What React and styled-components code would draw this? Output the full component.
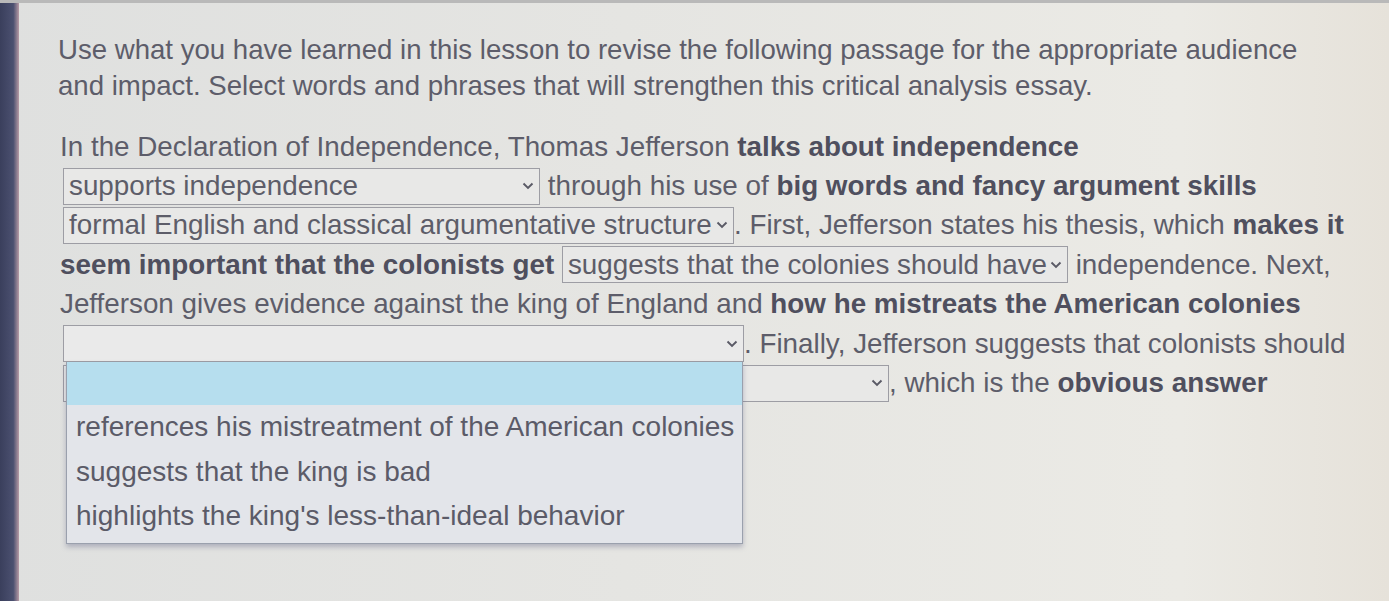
import React from "react";
import styled, { createGlobalStyle } from "styled-components";

const GlobalStyle = createGlobalStyle`
  html, body {
    margin: 0;
    padding: 0;
    height: 100%;
    overflow: hidden;
  }
  body {
    font-family: "Liberation Sans", Arial, sans-serif;
    background: #e2e2e0;
  }
`;

const Screen = styled.div`
  width: 1389px;
  height: 601px;
  display: flex;
  background: linear-gradient(90deg, #dfe0df 0%, #e5e5e2 45%, #ebeae5 85%, #e6e2da 100%);
  border-top: 3px solid #b9b9b9;
  box-sizing: border-box;
`;

// monitor bezel on the left edge of the photo
const Bezel = styled.div`
  width: 19px;
  flex-shrink: 0;
  background: linear-gradient(90deg, #3a3f5c 0%, #4b5070 70%, #b69aa5 100%);
`;

const Content = styled.div`
  flex: 1;
  padding: 29px 0 0 39px;
  color: #5d5d6a;
`;

const Instructions = styled.p`
  margin: 0 0 23px;
  font-size: 27.6px;
  line-height: 36px;
  width: 1290px;
`;

const Passage = styled.div`
  display: flex;
  flex-direction: column;
  font-size: 27.8px;
  margin-left: 2px;
`;

const Line = styled.div`
  display: flex;
  align-items: center;
  height: 39.4px;
  white-space: pre;
  position: relative;
  z-index: ${(p) => (p.$raised ? 2 : "auto")};
`;

const B = styled.b`
  font-weight: 700;
  color: #4f4f5e;
`;

const SelectWrap = styled.div`
  position: relative;
  margin-left: ${(p) => (p.$first ? "3px" : "0")};
`;

const SelectBox = styled.div`
  display: flex;
  align-items: center;
  justify-content: space-between;
  box-sizing: border-box;
  width: ${(p) => p.$w}px;
  height: 37px;
  padding: 0 5px 0 5px;
  border: 1px solid #9d9da4;
  background: ${(p) => (p.$open ? "#eaeaea" : "#e8e8e7")};
  color: #5d5d69;
  font-size: 27.8px;
  white-space: pre;
`;

const Chevron = () => (
  <svg width="12" height="8" viewBox="0 0 12 8" fill="none">
    <path d="M1.5 1.5 L6 6 L10.5 1.5" stroke="#5a5a66" strokeWidth="1.9" />
  </svg>
);

const Dropdown = styled.ul`
  position: absolute;
  left: 3px;
  top: 100%;
  width: 677px;
  margin: 0;
  padding: 0 0 4px;
  list-style: none;
  box-sizing: border-box;
  border: 1px solid #9aa0ad;
  border-top: none;
  background: #e3e5ea;
  box-shadow: 0 3px 5px rgba(80, 84, 120, 0.35);
  font-size: 28px;
  color: #5b5b68;
`;

const Option = styled.li`
  height: ${(p) => (p.$blank ? 43 : 44.5)}px;
  display: flex;
  align-items: center;
  padding-left: 9px;
  white-space: pre;
  background: ${(p) => (p.$active ? "#b6deee" : "transparent")};
`;

const Select = ({ w, value = "", options, first }) => (
  <SelectWrap $first={first}>
    <SelectBox $w={w} $open={!!options}>
      <span>{value}</span>
      <Chevron />
    </SelectBox>
    {options && (
      <Dropdown>
        <Option $blank $active />
        {options.map((o) => (
          <Option key={o}>{o}</Option>
        ))}
      </Dropdown>
    )}
  </SelectWrap>
);

const evidenceOptions = [
  "references his mistreatment of the American colonies",
  "suggests that the king is bad",
  "highlights the king's less-than-ideal behavior",
];

export default function App() {
  return (
    <>
      <GlobalStyle />
      <Screen>
        <Bezel />
        <Content>
          <Instructions>
            Use what you have learned in this lesson to revise the following passage for the appropriate audience
            and impact. Select words and phrases that will strengthen this critical analysis essay.
          </Instructions>
          <Passage>
            <Line>
              In the Declaration of Independence, Thomas Jefferson <B>talks about independence</B>
            </Line>
            <Line>
              <Select first w={477} value="supports independence" />
              {" through his use of "}
              <B>big words and fancy argument skills</B>
            </Line>
            <Line>
              <Select first w={671} value="formal English and classical argumentative structure" />
              {". First, Jefferson states his thesis, which "}
              <B>makes it</B>
            </Line>
            <Line>
              <B>seem important that the colonists get </B>
              <Select w={506} value="suggests that the colonies should have" />
              {" independence. Next,"}
            </Line>
            <Line>
              Jefferson gives evidence against the king of England and{" "}
              <B>how he mistreats the American colonies</B>
            </Line>
            <Line $raised>
              <Select first w={681} options={evidenceOptions} />
              {". Finally, Jefferson suggests that colonists should"}
            </Line>
            <Line>
              <Select first w={826} />
              {", which is the "}
              <B>obvious answer</B>
            </Line>
          </Passage>
        </Content>
      </Screen>
    </>
  );
}
